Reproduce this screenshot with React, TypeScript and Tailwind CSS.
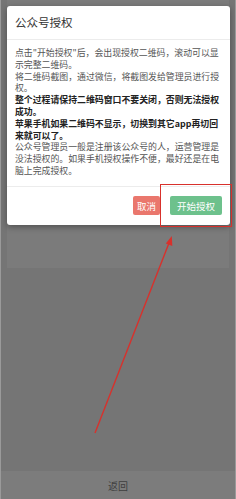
const font = { fontFamily: '"Noto Sans CJK SC", "Noto Sans", sans-serif' };

const lines: { text: string; bold?: boolean }[] = [
  { text: '点击"开始授权"后，会出现授权二维码，滚动可以显' },
  { text: '示完整二维码。' },
  { text: '将二维码截图，通过微信，将截图发给管理员进行授' },
  { text: '权。' },
  { text: '整个过程请保持二维码窗口不要关闭，否则无法授权', bold: true },
  { text: '成功。', bold: true },
  { text: '苹果手机如果二维码不显示，切换到其它app再切回', bold: true },
  { text: '来就可以了。', bold: true },
  { text: '公众号管理员一般是注册该公众号的人，运营管理是' },
  { text: '没法授权的。如果手机授权操作不便，最好还是在电' },
  { text: '脑上完成授权。' },
];

export default function App() {
  return (
    <div
      className="relative h-[499px] w-[236px] overflow-hidden bg-[#757575] border-x border-[#9a9a9a] flex flex-col"
      style={font}
    >
      {/* page behind the mask */}
      <div className="mx-[6px] h-[268px] bg-[#7b7b7b]" />
      <div className="flex-1" />
      <div className="h-[28px] bg-[#7c7c7c] flex items-center justify-center text-[10px] text-[#3f3f3f]">
        返回
      </div>

      {/* dialog */}
      <div className="absolute left-[6px] top-[6px] w-[223px] bg-white rounded-[3px] shadow-[0_2px_6px_rgba(0,0,0,0.35)]">
        <div className="h-[34px] px-[8px] flex items-center border-b border-[#ececec] text-[11.5px] text-[#333]">
          公众号授权
        </div>
        <div className="px-[8px] pt-[7px] pb-[9px] text-[8.9px] leading-[11.8px] text-[#555] border-b border-[#ececec]">
          {lines.map((l, i) => (
            <div
              key={i}
              className={`whitespace-nowrap ${l.bold ? 'font-bold text-[#222]' : ''}`}
            >
              {l.text}
            </div>
          ))}
        </div>
        <div className="h-[38px] px-[8px] flex items-center justify-end gap-[10px]">
          <button className="h-[19px] px-[4px] rounded-[2px] bg-[#ea776d] text-white text-[9.5px]">
            取消
          </button>
          <button className="h-[19px] px-[7px] rounded-[2px] bg-[#6dc18c] text-white text-[9.5px]">
            开始授权
          </button>
        </div>
      </div>

      {/* annotation: red box + arrow */}
      <div className="absolute left-[159px] top-[184px] w-[72px] h-[43px] border-[1.5px] border-[#d8312c]" />
      <svg className="absolute left-0 top-0" width="236" height="499" viewBox="0 0 236 499">
        <line x1="94" y1="433" x2="168" y2="243" stroke="#d8312c" strokeWidth="1.4" />
        <polygon points="170.8,236 171.3,246 164.8,243.5" fill="#d8312c" />
      </svg>
    </div>
  );
}
